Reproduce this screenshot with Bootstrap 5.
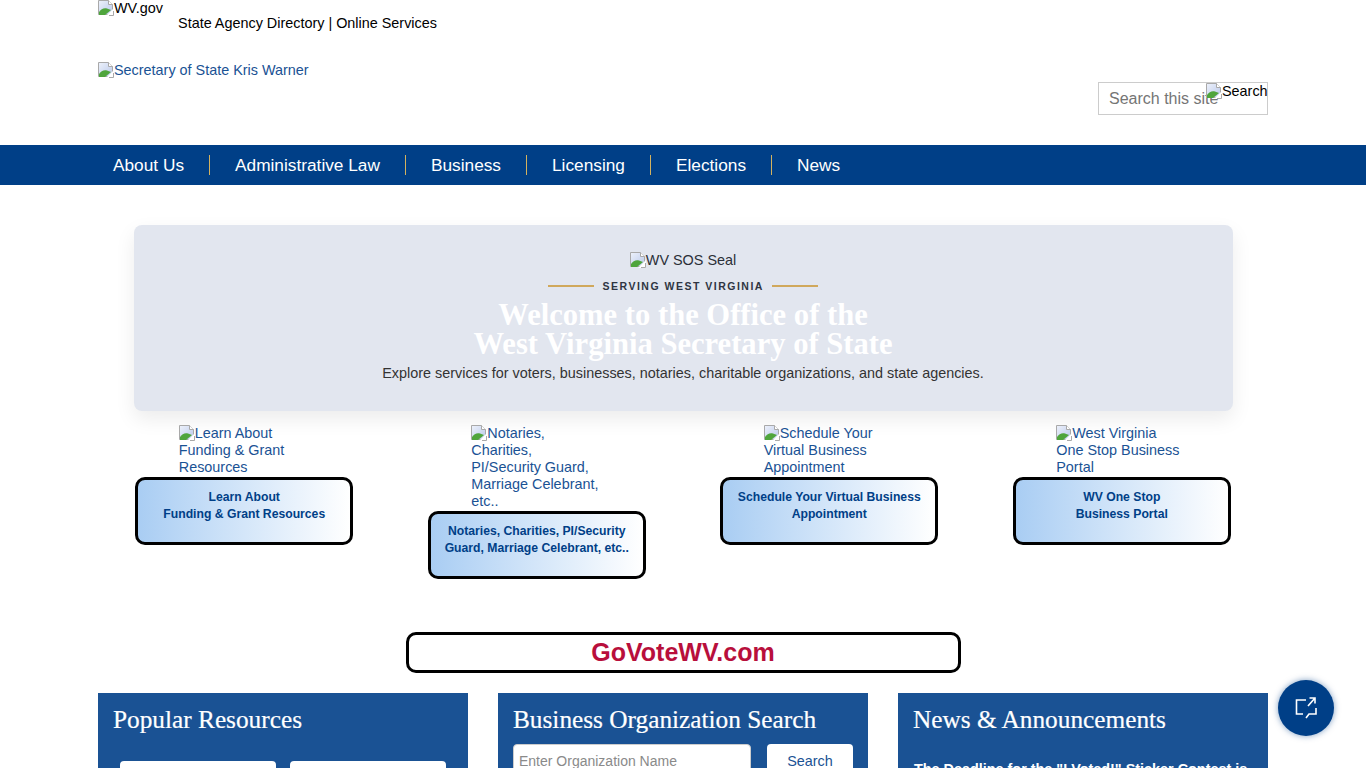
<!DOCTYPE html>
<html lang="en">
<head>
<meta charset="utf-8">
<title>WV Secretary of State</title>
<link href="https://cdn.jsdelivr.net/npm/bootstrap@5.3.0/dist/css/bootstrap.min.css" rel="stylesheet">
<style>
html,body{height:768px;overflow:hidden}
body{font-family:"Liberation Sans",Arial,sans-serif;font-size:14.4px;line-height:17px;color:#000;background:#fff}
a{color:#1a5294;text-decoration:none}
.wrap{width:1170px;margin:0 auto}
.brk{width:16px;height:16px;display:inline-block;vertical-align:-1px;transform:translateY(2px)}
.top-head{height:145px;position:relative;display:flow-root}
.top-line{height:62px;margin-top:-2px}
.top-links{margin-left:15px;padding-top:17px}
.sos-link{height:83px}
.site-search{position:absolute;left:1000px;top:82px;width:170px;height:33px;border:1px solid #ccc;background:#fff}
.site-search input{border:0;outline:0;width:100%;height:31px;padding:0 10px;font-size:16px;background:transparent}
.site-search input::placeholder{color:#757575;opacity:1}
.search-img{position:absolute;left:107px;top:-2px;color:#000;white-space:nowrap;font-size:14.4px}
.main-nav{background:#003f87;height:40px}
.main-nav a{color:#fff;font-size:17.28px;line-height:20px;padding:0 25px;border-left:1px solid #d3b25f}
.main-nav a:first-child{border-left:0;padding-left:15px}
.hero-box{width:1099px;height:186px;margin:40px auto 0;background:#e2e6ef;border-radius:8px;box-shadow:0 8px 20px rgba(0,0,0,.08);text-align:center;padding-top:25px;color:#2b2f38}
.eyebrow{font-size:10.5px;font-weight:700;letter-spacing:1.5px;line-height:14px;margin-top:10px;color:#2f3542}
.eyebrow i{display:inline-block;width:46px;height:2px;background:#d0a85c;vertical-align:3px;margin:0 4px}
.hero-title{font-family:"Liberation Serif",Georgia,serif;font-weight:700;font-size:30.6px;line-height:29px;color:#fff;margin:8px 0 4px}
.hero-sub{font-size:14.4px;line-height:20px;margin:0;color:#333}
.tiles{margin:12px 0 0;height:209px}
.tile{width:292.5px;display:flex;flex-direction:column;align-items:center}
.tile-img{width:130px;display:block;margin:0 1px 1px 0}
.tile-btn{width:218px;height:68px;border:3px solid #000;border-radius:10px;background:linear-gradient(90deg,#a9cdf3,#fff);text-align:center;font-size:12.2px;font-weight:700;color:#003f87;padding:9px 6px 0;line-height:17px}
.vote-btn{display:block;width:555px;height:41px;margin:0 auto;border:3px solid #000;border-radius:10px;text-align:center;font-size:25px;font-weight:700;line-height:35px;color:#b80f3c}
.panels{margin-top:20px;gap:30px}
.panel-box{width:370px;height:200px;background:#1a5294;padding:14px 15px 15px;color:#fff}
.panel-box h2{font-family:"Liberation Serif",Georgia,serif;font-size:25.3px;line-height:25px;margin:0;color:#fff;font-weight:400;-webkit-text-stroke:.2px #fff}
.res-row{gap:14px;padding-left:7px;margin-top:29px}
.org-row{gap:16px;margin-top:12px}
.res-btn{width:156px;height:40px;background:#fff;border-radius:4px}
.org-input{width:238px;height:34px;border:1px solid #ccc;border-radius:4px;font-size:14px;padding:0 5px}
.org-input::placeholder{color:#8a8a8a;opacity:1}
.org-btn{width:86px;height:34px;background:#fff;border:0;border-radius:4px;font-size:14.4px;color:#1a5294;padding:0}
.news-item{font-size:14.4px;font-weight:700;line-height:17px;margin-top:29px;padding-left:1px;white-space:nowrap}
.chat-fab{position:fixed;left:1278px;top:680px;width:56px;height:56px;border-radius:50%;background:#003f87;box-shadow:0 0 6px rgba(0,63,135,.5);border:0}
</style>
</head>
<body>
<svg width="0" height="0" class="position-absolute">
<defs>
<linearGradient id="pg" x1="0" y1="0" x2="1" y2="1"><stop offset="0" stop-color="#eef2fb"/><stop offset="1" stop-color="#b9c8ea"/></linearGradient>
<symbol id="broken" viewBox="0 0 16 16">
<path d="M.5.5h10l4 4v10H.5z" fill="url(#pg)" stroke="#a9a9a9"/>
<path d="M10.5.5v4h4" fill="#fff" stroke="#a9a9a9"/>
<path d="M1 15V12c2-3 5-4.500 8-3.500l4 1.500-6 5z" fill="#4fa53c"/>
<path d="M16 8 8 16h8z" fill="#fff"/>
<path d="M15.500 11v4.500H11" fill="none" stroke="#a9a9a9"/>
</symbol>
</defs>
</svg>
<header class="wrap top-head">
<div class="top-line d-flex align-items-start">
<span><svg class="brk"><use href="#broken"/></svg>WV.gov</span>
<div class="top-links">State Agency Directory | Online Services</div>
</div>
<div class="sos-link"><a href="#"><svg class="brk"><use href="#broken"/></svg>Secretary of State Kris Warner</a></div>
<form class="site-search" onsubmit="return false">
<input type="text" placeholder="Search this site" aria-label="Search this site">
<span class="search-img"><svg class="brk"><use href="#broken"/></svg>Search</span>
</form>
</header>
<nav class="main-nav">
<div class="wrap d-flex align-items-center h-100">
<a href="#">About Us</a><a href="#">Administrative Law</a><a href="#">Business</a><a href="#">Licensing</a><a href="#">Elections</a><a href="#">News</a>
</div>
</nav>
<main class="wrap">
<section class="hero-box">
<div><svg class="brk"><use href="#broken"/></svg>WV SOS Seal</div>
<div class="eyebrow"><i></i> SERVING WEST VIRGINIA <i></i></div>
<h1 class="hero-title">Welcome to the Office of the<br>West Virginia Secretary of State</h1>
<p class="hero-sub">Explore services for voters, businesses, notaries, charitable organizations, and state agencies.</p>
</section>
<section class="tiles d-flex align-items-start">
<a class="tile" href="#"><span class="tile-img"><svg class="brk"><use href="#broken"/></svg>Learn About Funding &amp; Grant Resources</span><span class="tile-btn">Learn About<br>Funding &amp; Grant Resources</span></a>
<a class="tile" href="#"><span class="tile-img"><svg class="brk"><use href="#broken"/></svg>Notaries, Charities, PI/Security Guard, Marriage Celebrant, etc..</span><span class="tile-btn">Notaries, Charities, PI/Security Guard, Marriage Celebrant, etc..</span></a>
<a class="tile" href="#"><span class="tile-img"><svg class="brk"><use href="#broken"/></svg>Schedule Your Virtual Business Appointment</span><span class="tile-btn">Schedule Your Virtual Business Appointment</span></a>
<a class="tile" href="#"><span class="tile-img"><svg class="brk"><use href="#broken"/></svg>West Virginia One Stop Business Portal</span><span class="tile-btn">WV One Stop<br>Business Portal</span></a>
</section>
<a class="vote-btn" href="#">GoVoteWV.com</a>
<section class="panels d-flex">
<div class="panel-box">
<h2>Popular Resources</h2>
<div class="res-row d-flex"><div class="res-btn"></div><div class="res-btn"></div></div>
</div>
<div class="panel-box">
<h2>Business Organization Search</h2>
<div class="org-row d-flex"><input class="org-input" placeholder="Enter Organization Name" aria-label="Enter Organization Name"><button class="org-btn">Search</button></div>
</div>
<div class="panel-box">
<h2>News &amp; Announcements</h2>
<div class="news-item">The Deadline for the "I Voted!" Sticker Contest is</div>
</div>
</section>
</main>
<button class="chat-fab d-flex align-items-center justify-content-center" aria-label="Feedback">
<svg width="24" height="24" viewBox="0 0 24 24" fill="none" stroke="#fff" stroke-width="1.6"><path d="M12 4H2.5v14H9"/><path d="M22 12v6h-7l-3 4"/><path d="M14 10l7-8M15.5 2H21v5.5"/></svg>
</button>
</body>
</html>
